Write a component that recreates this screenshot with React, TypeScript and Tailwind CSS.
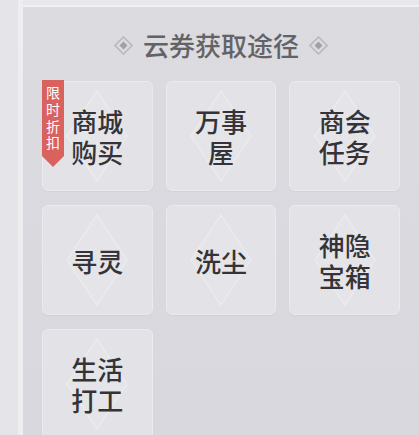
import React from "react";

type Way = { lines: string[]; badge?: boolean };

const WAYS: Way[] = [
  { lines: ["商城", "购买"], badge: true },
  { lines: ["万事", "屋"] },
  { lines: ["商会", "任务"] },
  { lines: ["寻灵"] },
  { lines: ["洗尘"] },
  { lines: ["神隐", "宝箱"] },
  { lines: ["生活", "打工"] },
];

const font = { fontFamily: '"Noto Sans CJK SC", "Noto Sans", sans-serif' };

function TitleDiamond() {
  return (
    <svg width="19" height="19" viewBox="0 0 19 19" className="shrink-0">
      <polygon points="9.5,1 18,9.5 9.5,18 1,9.5" fill="none" stroke="#b9b9be" strokeWidth="1.6" />
      <polygon points="9.5,5.5 13.5,9.5 9.5,13.5 5.5,9.5" fill="#a0a0a5" />
    </svg>
  );
}

function Badge() {
  return (
    <div className="absolute left-[-1px] top-[-2px] flex flex-col items-center">
      <div className="flex w-[22px] flex-col items-center bg-[#d9625f] pt-[4px] pb-[5px] text-[14px] leading-[16.8px] text-white">
        <span>限</span>
        <span>时</span>
        <span>折</span>
        <span>扣</span>
      </div>
      <div className="h-0 w-0 border-l-[11px] border-r-[11px] border-t-[11px] border-l-transparent border-r-transparent border-t-[#d9625f]" />
    </div>
  );
}

function Card({ way }: { way: Way }) {
  return (
    <div className="relative flex h-[110px] items-center justify-center rounded-[6px] border border-[#ebebef] bg-[#e3e3e7] shadow-[0_1px_1px_rgba(0,0,0,0.04)]">
      <svg
        className="absolute left-1/2 top-1/2 -translate-x-1/2 -translate-y-1/2"
        width="62"
        height="92"
        viewBox="0 0 62 92"
      >
        <polygon points="31,1 61,46 31,91 1,46" fill="#e5e5e9" stroke="#ebebee" strokeWidth="1.5" />
      </svg>
      {way.badge && <Badge />}
      <div className="relative text-center text-[26px] font-medium leading-[31px] text-[#343438]">
        {way.lines.map((l) => (
          <div key={l}>{l}</div>
        ))}
      </div>
    </div>
  );
}

export default function App() {
  return (
    <div className="flex h-[435px] w-[419px] overflow-hidden bg-[#e6e6ea]" style={font}>
      <div className="w-[18px] shrink-0 bg-[#e4e4e9]" />
      <div className="flex flex-1 flex-col border-l-[5px] border-[#eeeef1]">
        <div className="h-[5px] shrink-0 bg-[#e8e8ec]" />
        <div className="flex-1 border-t-[2px] border-[#f1f1f3] bg-gradient-to-b from-[#dbdbe0] to-[#d8d8de] px-[19px] pt-[23px]">
          <div className="mb-[21px] flex items-center justify-center gap-[10px]">
            <TitleDiamond />
            <span className="text-[26px] font-medium leading-[30px] text-[#636367]">云券获取途径</span>
            <TitleDiamond />
          </div>
          <div className="grid grid-cols-3 gap-x-[13px] gap-y-[14px]">
            {WAYS.map((w) => (
              <Card key={w.lines.join("")} way={w} />
            ))}
          </div>
        </div>
      </div>
    </div>
  );
}
